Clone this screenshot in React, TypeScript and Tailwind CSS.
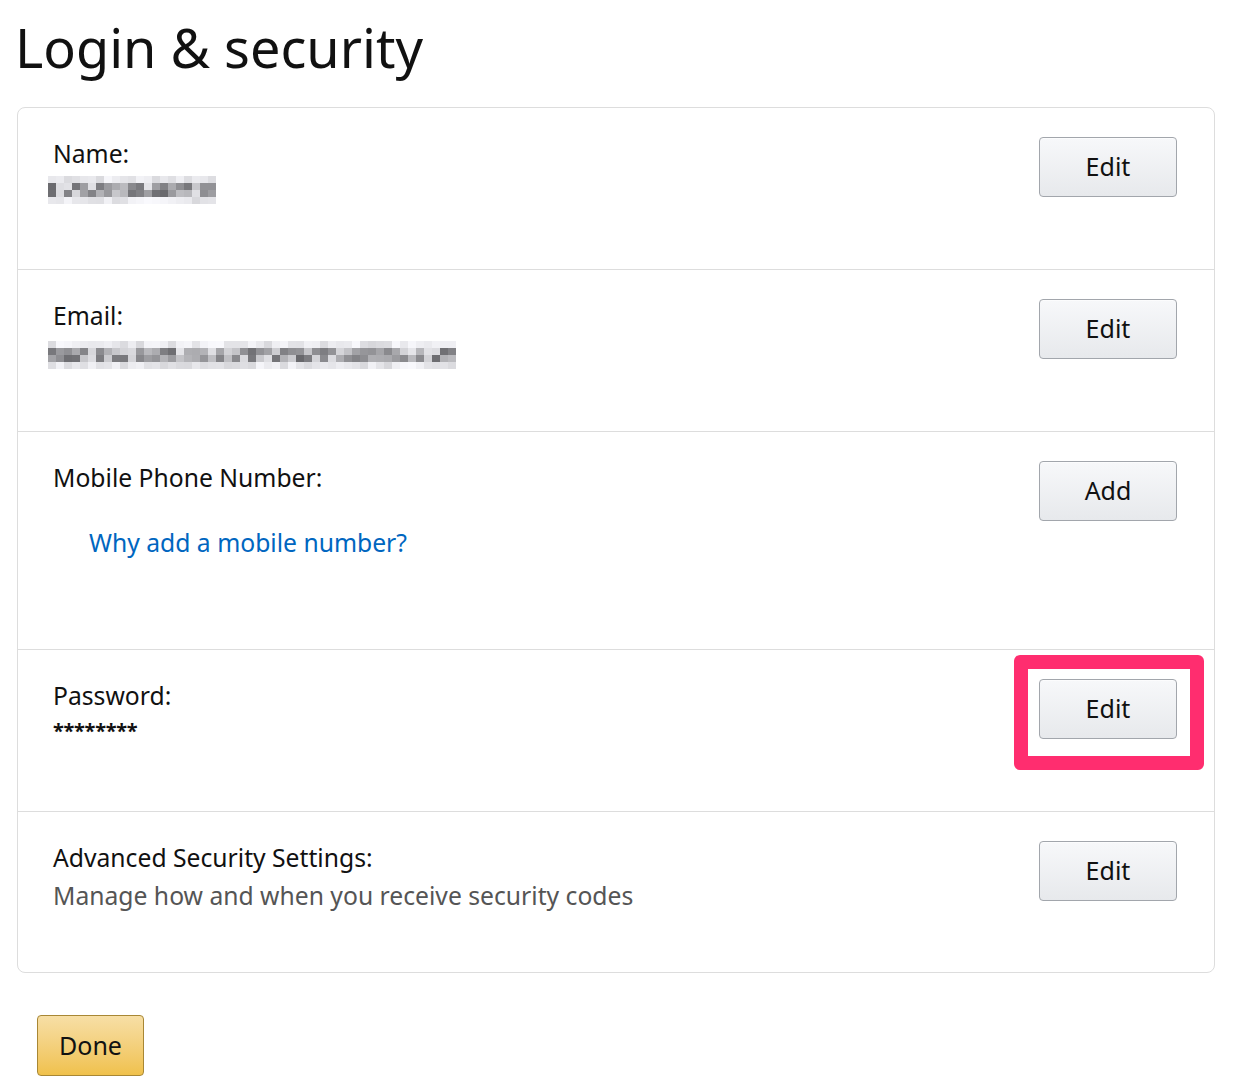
import React from "react";

// pixel mosaic used to stand in for the blurred personal data
function Mosaic({ cols, seed }: { cols: number; seed: number }) {
  const rows = 4;
  const cells: number[] = [];
  let s = seed;
  for (let i = 0; i < cols * rows; i++) {
    s = (s * 9301 + 49297) % 233280;
    const row = Math.floor(i / cols);
    const r = s / 233280;
    const edge = row === 0 || row === rows - 1;
    const base = edge ? 215 : 100;
    const spread = edge ? 35 : 130;
    cells.push(Math.round(base + r * spread));
  }
  return (
    <div className="grid" style={{ gridTemplateColumns: `repeat(${cols}, 8px)` }}>
      {cells.map((g, i) => (
        <div key={i} className="h-[7px] w-[8px]" style={{ backgroundColor: `rgb(${g},${g},${Math.min(255, g + 4)})` }} />
      ))}
    </div>
  );
}

function GrayButton({ label }: { label: string }) {
  return (
    <button className="h-[60px] w-[138px] rounded-[4px] border border-[#a2a6ac] bg-gradient-to-b from-[#f7f8fa] to-[#e7e9ec] text-[25px] text-[#111] shadow-[0_1px_0_rgba(255,255,255,0.6)_inset]">
      {label}
    </button>
  );
}

export default function App() {
  return (
    <div className="min-h-[1080px] bg-white pl-[17px] pr-[27px] pt-[14px] text-[#111]" style={{ fontFamily: '"Noto Sans", "Open Sans", sans-serif' }}>
      <h1 className="-ml-[2px] text-[54px] leading-[66px]">Login &amp; security</h1>

      <div className="mt-[27px] rounded-[8px] border border-[#dddddd]">
        {/* Name */}
        <div className="flex h-[162px] justify-between border-b border-[#dddddd] pl-[35px] pr-[37px] pt-[29px]">
          <div>
            <div className="text-[24.7px] leading-[34px]">Name:</div>
            <div className="-ml-[5px] mt-[5px]"><Mosaic cols={21} seed={7} /></div>
          </div>
          <GrayButton label="Edit" />
        </div>

        {/* Email */}
        <div className="flex h-[162px] justify-between border-b border-[#dddddd] pl-[35px] pr-[37px] pt-[29px]">
          <div>
            <div className="text-[24.7px] leading-[34px]">Email:</div>
            <div className="-ml-[5px] mt-[8px]"><Mosaic cols={51} seed={23} /></div>
          </div>
          <GrayButton label="Edit" />
        </div>

        {/* Mobile */}
        <div className="flex h-[218px] justify-between border-b border-[#dddddd] pl-[35px] pr-[37px] pt-[29px]">
          <div>
            <div className="text-[24.7px] leading-[34px]">Mobile Phone Number:</div>
            <a className="ml-[36px] mt-[31px] block text-[24.7px] leading-[34px] text-[#0066c0]">Why add a mobile number?</a>
          </div>
          <GrayButton label="Add" />
        </div>

        {/* Password */}
        <div className="flex h-[162px] justify-between border-b border-[#dddddd] pl-[35px] pr-[37px] pt-[29px]">
          <div>
            <div className="text-[24.7px] leading-[34px]">Password:</div>
            <div className="mt-[6px] text-[20px] font-bold leading-[24px] tracking-[-0.3px]">********</div>
          </div>
          <div className="relative">
            <div className="absolute -left-[25px] -top-[24px] h-[115px] w-[190px] rounded-[6px] border-[14px] border-[#ff2d6f]" />
            <GrayButton label="Edit" />
          </div>
        </div>

        {/* Advanced */}
        <div className="flex h-[160px] justify-between pl-[35px] pr-[37px] pt-[29px]">
          <div>
            <div className="text-[24.7px] leading-[34px]">Advanced Security Settings:</div>
            <div className="mt-[4px] text-[24.7px] leading-[34px] text-[#555]">Manage how and when you receive security codes</div>
          </div>
          <GrayButton label="Edit" />
        </div>
      </div>

      <button className="ml-[20px] mt-[42px] h-[61px] w-[107px] rounded-[4px] border border-[#a88734] bg-gradient-to-b from-[#f7dfa5] to-[#f0c14b] text-[25px] text-[#111]">
        Done
      </button>
    </div>
  );
}
